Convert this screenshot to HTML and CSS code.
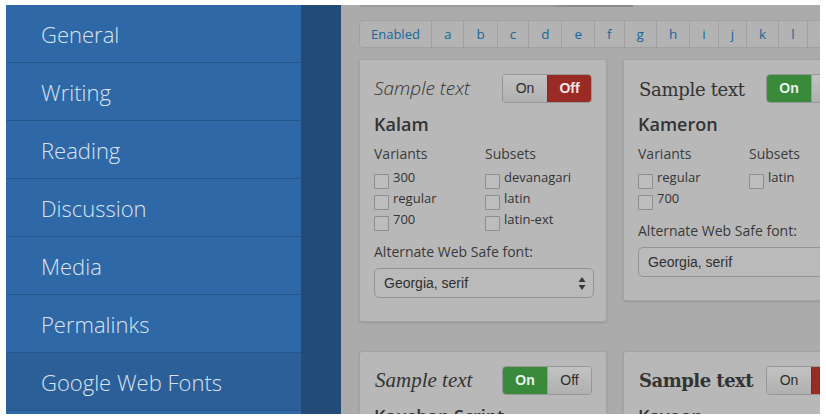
FILE: index.html
```html
<!DOCTYPE html>
<html>
<head>
<meta charset="utf-8">
<link rel="stylesheet" href="styles.css">
</head>
<body>
<div class="frame">
  <nav class="sidebar">
    <div class="menu-item">General</div>
    <div class="menu-item">Writing</div>
    <div class="menu-item">Reading</div>
    <div class="menu-item">Discussion</div>
    <div class="menu-item">Media</div>
    <div class="menu-item">Permalinks</div>
    <div class="menu-item active">Google Web Fonts</div>
  </nav>
  <div class="strip"></div>
  <main class="content">
    <div class="topline"></div>
    <div class="alpha">
      <span class="alpha-item">Enabled</span>
      <span class="alpha-item">a</span>
      <span class="alpha-item">b</span>
      <span class="alpha-item">c</span>
      <span class="alpha-item">d</span>
      <span class="alpha-item">e</span>
      <span class="alpha-item">f</span>
      <span class="alpha-item">g</span>
      <span class="alpha-item">h</span>
      <span class="alpha-item">i</span>
      <span class="alpha-item">j</span>
      <span class="alpha-item">k</span>
      <span class="alpha-item">l</span>
      <span class="alpha-item">m</span>
      <span class="alpha-item">n</span>
    </div>
    <div class="cards">
      <section class="card">
        <div class="card-head">
          <span class="sample s-kalam">Sample text</span>
          <span class="toggle"><span class="tg">On</span><span class="tg off-on">Off</span></span>
        </div>
        <h2 class="font-name">Kalam</h2>
        <div class="cols">
          <div>
            <div class="col-title">Variants</div>
            <label class="cb"><span class="box"></span>300</label>
            <label class="cb"><span class="box"></span>regular</label>
            <label class="cb"><span class="box"></span>700</label>
          </div>
          <div>
            <div class="col-title">Subsets</div>
            <label class="cb"><span class="box"></span>devanagari</label>
            <label class="cb"><span class="box"></span>latin</label>
            <label class="cb"><span class="box"></span>latin-ext</label>
          </div>
        </div>
        <div class="alt-label">Alternate Web Safe font:</div>
        <div class="select"><span>Georgia, serif</span>
          <svg class="arrows" width="8" height="13" viewBox="0 0 8 13"><path d="M4 0 L7.5 5 L0.5 5 Z M4 13 L7.5 8 L0.5 8 Z" fill="#3a3a3a"/></svg>
        </div>
      </section>
      <section class="card">
        <div class="card-head">
          <span class="sample s-kameron">Sample text</span>
          <span class="toggle"><span class="tg on-on">On</span><span class="tg">Off</span></span>
        </div>
        <h2 class="font-name">Kameron</h2>
        <div class="cols">
          <div>
            <div class="col-title">Variants</div>
            <label class="cb"><span class="box"></span>regular</label>
            <label class="cb"><span class="box"></span>700</label>
          </div>
          <div>
            <div class="col-title">Subsets</div>
            <label class="cb"><span class="box"></span>latin</label>
          </div>
        </div>
        <div class="alt-label">Alternate Web Safe font:</div>
        <div class="select"><span>Georgia, serif</span>
          <svg class="arrows" width="8" height="13" viewBox="0 0 8 13"><path d="M4 0 L7.5 5 L0.5 5 Z M4 13 L7.5 8 L0.5 8 Z" fill="#3a3a3a"/></svg>
        </div>
      </section>
      <section class="card">
        <div class="card-head">
          <span class="sample s-kaushan">Sample text</span>
          <span class="toggle"><span class="tg on-on">On</span><span class="tg">Off</span></span>
        </div>
        <h2 class="font-name">Kaushan Script</h2>
      </section>
      <section class="card">
        <div class="card-head">
          <span class="sample s-kavoon">Sample text</span>
          <span class="toggle"><span class="tg">On</span><span class="tg off-on">Off</span></span>
        </div>
        <h2 class="font-name">Kavoon</h2>
      </section>
    </div>
  </main>
</div>
</body>
</html>
```
FILE: styles.css
```css
* { box-sizing: border-box; }
html, body { margin: 0; padding: 0; background: #ffffff; }
body { font-family: "Open Sans", "Liberation Sans", sans-serif; }

.frame {
  margin: 5px 6px 6px 6px;
  width: 814px;
  height: 409px;
  display: flex;
  overflow: hidden;
}

.sidebar {
  width: 295px;
  flex-shrink: 0;
  background: #2f68a6;
}
.menu-item {
  height: 58px;
  border-bottom: 1px solid #24578c;
  padding: 3px 0 0 35px;
  line-height: 53px;
  font-size: 22px;
  font-weight: 300;
  color: #d9e4f0;
  white-space: nowrap;
}
.menu-item.active { background: #2c5f98; }

.strip {
  width: 40px;
  flex-shrink: 0;
  background: #234b78;
}

.content {
  flex: 1;
  min-width: 0;
  background: #ababab;
  padding-left: 18px;
  overflow: hidden;
}
.topline {
  height: 2px;
  width: 273px;
  margin-left: 1px;
  background: linear-gradient(to right, #9c9c9c 0%, #9a9a9a 70%, #8a8a8a 75%, #8a8a8a 100%);
}

.alpha {
  margin-top: 13px;
  display: inline-flex;
  height: 28px;
  border: 1px solid #a0a0a0;
  border-radius: 4px;
  background: #b3b3b3;
  white-space: nowrap;
}
.alpha-item {
  padding: 0 12px;
  line-height: 26px;
  font-size: 13.5px;
  color: #17669b;
  border-left: 1px solid #a0a0a0;
}
.alpha-item:first-child { border-left: none; padding: 0 11px 0 11px; font-size: 13px; }

.cards {
  margin-top: 11px;
  display: grid;
  grid-template-columns: 248px 248px;
  column-gap: 16px;
  row-gap: 29px;
  align-items: start;
}
.card {
  background: #b8b8b8;
  border: 1px solid #a3a3a3;
  border-radius: 3px;
  box-shadow: 0 1px 2px rgba(0,0,0,0.12);
  padding: 14px 14px 23px 14px;
}
.card-head {
  display: flex;
  justify-content: space-between;
  align-items: center;
  height: 29px;
}
.sample { color: #333333; white-space: nowrap; }
.s-kalam { font-family: "Open Sans", sans-serif; font-style: italic; font-weight: 300; font-size: 19px; margin-top: -2px; }
.s-kameron { font-family: "DejaVu Serif", serif; font-size: 18px; letter-spacing: -0.3px; margin-top: 2px; margin-left: 1px; }
.s-kaushan { font-family: "Liberation Serif", serif; font-style: italic; font-size: 21px; margin-left: 1px; }
.s-kavoon { font-family: "DejaVu Serif", serif; font-weight: 700; font-size: 18px; letter-spacing: -0.5px; margin-left: 1px; }

.toggle {
  display: inline-flex;
  height: 29px;
  border: 1px solid #969696;
  border-radius: 4px;
  overflow: hidden;
}
.tg {
  width: 44px;
  text-align: center;
  line-height: 27px;
  font-family: "Liberation Sans", Arial, sans-serif;
  font-size: 14px;
  color: #2e2e2e;
  background: linear-gradient(#c2c2c2, #b0b0b0);
}
.tg + .tg { border-left: 1px solid #9a9a9a; }
.tg.off-on { background: #9a2b24; color: #f2e6e6; font-weight: 700; border-left-color: #8a241e; }
.tg.on-on { background: #3a8a3b; color: #e8f2e8; font-weight: 700; }

.font-name {
  margin: 9px 0 8px 0;
  font-size: 18px;
  font-weight: 600;
  line-height: 24px;
  color: #333333;
  white-space: nowrap;
}
.cols {
  display: grid;
  grid-template-columns: 111px 1fr;
}
.col-title {
  font-size: 14px;
  line-height: 20px;
  color: #3c3c3c;
  margin-bottom: 5px;
}
.cb {
  display: flex;
  align-items: flex-start;
  gap: 4px;
  height: 21px;
  font-size: 13px;
  line-height: 17px;
  color: #333333;
}
.box {
  width: 15px;
  height: 15px;
  margin-top: 5px;
  border: 1px solid #8d8d8d;
  background: #bdbdbd;
  border-radius: 1px;
  flex-shrink: 0;
}
.alt-label {
  margin-top: 10px;
  font-size: 14px;
  line-height: 20px;
  color: #3a3a3a;
  white-space: nowrap;
}
.select {
  margin-top: 6px;
  width: 220px;
  height: 30px;
  border: 1px solid #939393;
  border-radius: 5px;
  background: #bababa;
  display: flex;
  align-items: center;
  justify-content: space-between;
  padding: 0 7px 0 9px;
  font-family: "Liberation Sans", Arial, sans-serif;
  font-size: 14px;
  color: #303030;
}
.arrows { display: block; }
```
